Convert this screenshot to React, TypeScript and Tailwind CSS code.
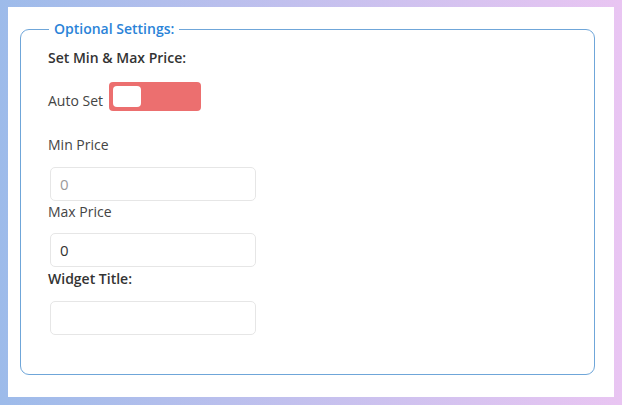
import React from 'react';

export default function App() {
  return (
    <div className="w-[622px] h-[405px] bg-gradient-to-r from-[#9dbbea] to-[#e9c5f2] pl-[8px] pr-[8px] pt-[7px] pb-[8px] font-['Open_Sans',sans-serif]">
      <div className="h-full bg-white pl-[12px] pr-[19px] pt-[13px] pb-[22px]">
        <fieldset className="h-full border border-[#6fa6d9] rounded-[9px] pl-[27px] pr-[10px] m-0">
          <legend className="ml-[1px] px-[5px] text-[14px] font-semibold text-[#2a83d8] leading-[18px]">
            Optional Settings:
          </legend>
          <div className="text-[14px] font-semibold text-[#333] leading-[20px] mt-[10px]">Set Min &amp; Max Price:</div>
          <div className="flex items-start mt-[14px]">
            <span className="text-[14px] text-[#444] leading-[20px] mr-[6px] mt-[9px]">Auto Set</span>
            <button className="w-[92px] h-[29px] rounded-[4px] bg-[#ec6f6f] p-[4px] flex items-center">
              <span className="block w-[28px] h-[21px] rounded-[4px] bg-white" />
            </button>
          </div>
          <div className="text-[14px] text-[#444] leading-[20px] mt-[24px]">Min Price</div>
          <input
            placeholder="0"
            className="block mt-[12px] ml-[2px] w-[206px] h-[34px] border border-[#e6e6e6] rounded-[5px] px-[9px] text-[15px] text-[#333] placeholder:text-[#9a9a9a] outline-none"
          />
          <div className="text-[14px] text-[#444] leading-[20px] mt-[1px]">Max Price</div>
          <input
            defaultValue="0"
            className="block mt-[11px] ml-[2px] w-[206px] h-[34px] border border-[#e6e6e6] rounded-[5px] px-[9px] text-[15px] text-[#333] outline-none"
          />
          <div className="text-[14px] font-semibold text-[#333] leading-[20px] mt-[2px]">Widget Title:</div>
          <input className="block mt-[12px] ml-[2px] w-[206px] h-[34px] border border-[#e6e6e6] rounded-[5px] px-[9px] text-[15px] text-[#333] outline-none" />
        </fieldset>
      </div>
    </div>
  );
}
